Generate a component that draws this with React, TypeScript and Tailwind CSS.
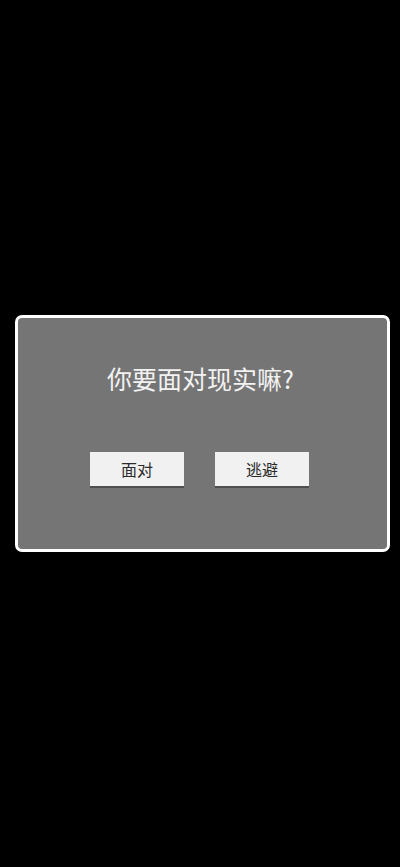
export default function App() {
  return (
    <div
      className="w-[400px] h-[867px] bg-black flex flex-col"
      style={{ fontFamily: '"Noto Sans CJK SC", "Noto Sans", sans-serif' }}
    >
      <div className="mt-[315px] ml-[15px] w-[375px] h-[237px] border-[3px] border-white rounded-[7px] bg-[#757575] flex flex-col items-center">
        <div className="mt-[44px] text-[25px] leading-[33px] text-[#f2f2f2] pr-[4px]">
          你要面对现实嘛?
        </div>
        <div className="mt-[57px] flex gap-[31px] pr-[6px]">
          <button className="w-[94px] h-[36px] bg-[#f1f1f1] border-b-2 border-[#505050] text-[16px] text-[#2a2a2a] flex items-center justify-center pb-[1px]">
            面对
          </button>
          <button className="w-[94px] h-[36px] bg-[#f1f1f1] border-b-2 border-[#505050] text-[16px] text-[#2a2a2a] flex items-center justify-center pb-[1px]">
            逃避
          </button>
        </div>
      </div>
    </div>
  );
}
